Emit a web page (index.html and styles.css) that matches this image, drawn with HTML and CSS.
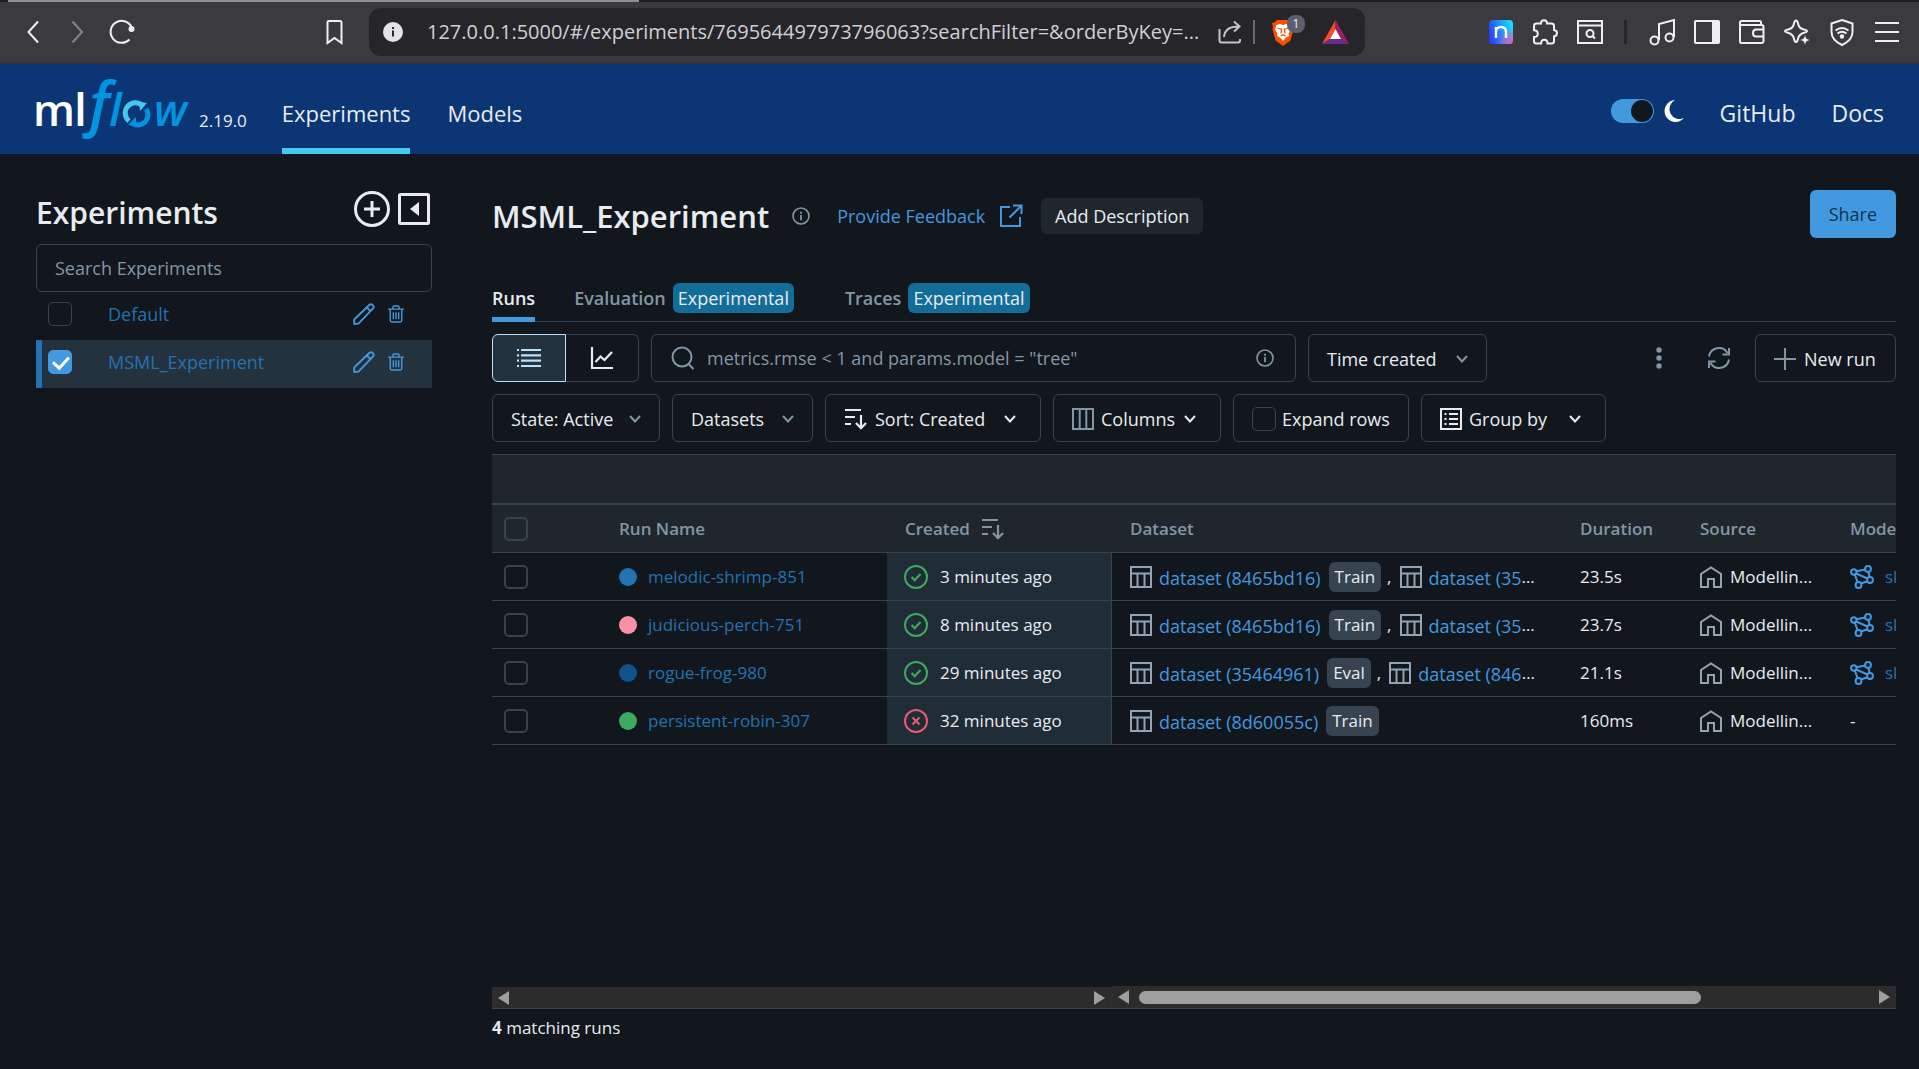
FILE: index.html
```html
<!DOCTYPE html>
<html lang="en">
<head>
<meta charset="utf-8">
<title>MSML_Experiment - MLflow</title>
<link rel="stylesheet" href="styles.css">
</head>
<body>
<svg class="sprite" aria-hidden="true">
  <defs>
    <symbol id="chevron" viewBox="0 0 14 14"><path d="M2 4l5 5.500 5-5.500" fill="none" stroke="currentColor" stroke-width="2"/></symbol>
    <symbol id="info" viewBox="0 0 18 18"><circle cx="9" cy="9" r="8" fill="none" stroke="currentColor" stroke-width="1.600"/><path d="M9 8v5.200M9 4.800v1.900" stroke="currentColor" stroke-width="1.800"/></symbol>
    <symbol id="sort" viewBox="0 0 24 24"><path d="M1 3h16M1 10h10M1 17h6M17 8v13M12 16l5 5.200 5-5.200" fill="none" stroke="currentColor" stroke-width="2.200"/></symbol>
    <symbol id="pencil" viewBox="0 0 22 22"><path d="M1.200 21v-4.500L16.500 1.800q1.600-1.400 3.300.3t.3 3.300L5.400 20.600zM13.800 4.500l3.700 3.700" fill="none" stroke="currentColor" stroke-width="1.900" stroke-linejoin="round"/></symbol>
    <symbol id="trash" viewBox="0 0 18 20"><path d="M0 4.500h18M2.500 4.500v12.500q0 2 2 2h9q2 0 2-2V4.500M5.500 4V2.500q0-1.500 1.500-1.500h4q1.500 0 1.500 1.500V4M6 8v8M9 8v8M12 8v8" fill="none" stroke="currentColor" stroke-width="1.600"/></symbol>
    <symbol id="table" viewBox="0 0 22 22"><path d="M1 1h20v20H1zM1 7.500h20M7.500 7.500V21M14.500 7.500V21" fill="none" stroke="currentColor" stroke-width="2"/></symbol>
    <symbol id="home" viewBox="0 0 22 22"><path d="M1 21V8L11 1.500 21 8v13h-7v-8H8v8z" fill="none" stroke="currentColor" stroke-width="2"/></symbol>
    <symbol id="model" viewBox="0 0 24 24"><g fill="none" stroke="currentColor" stroke-width="2"><circle cx="3.800" cy="7" r="2.700"/><circle cx="18" cy="4" r="2.900"/><circle cx="20" cy="15" r="2.900"/><circle cx="8.500" cy="20" r="2.900"/><path d="M6.500 6.300l8.600-1.700M18.500 7l1 5M11 18.500l6.500-2.300M4.800 9.600l2.800 7.600M6 8.500l11.700 5"/></g></symbol>
    <symbol id="ok" viewBox="0 0 24 24"><circle cx="12" cy="12" r="11" fill="none" stroke="currentColor" stroke-width="2"/><path d="M7.500 12l3.200 3.200L16.500 9" fill="none" stroke="currentColor" stroke-width="2"/></symbol>
    <symbol id="fail" viewBox="0 0 24 24"><circle cx="12" cy="12" r="11" fill="none" stroke="currentColor" stroke-width="2"/><path d="M8.500 8.500l7 7M15.500 8.500l-7 7" fill="none" stroke="currentColor" stroke-width="2"/></symbol>
  </defs>
</svg>

<div class="loading"><span></span></div>
<div class="browser">
  <button class="tool" aria-label="Back"><svg width="24" height="24" viewBox="0 0 24 24"><path d="M17 1.500L7.500 12 17 22.500" class="line"/></svg></button>
  <button class="tool dim" aria-label="Forward"><svg width="24" height="24" viewBox="0 0 24 24"><path d="M7.500 1.500L17 12 7.500 22.500" class="line"/></svg></button>
  <button class="tool" aria-label="Reload"><svg width="26" height="26" viewBox="0 0 26 26"><path d="M20.500 20.500A11 11 0 1 1 22.500 8" class="line"/><circle cx="22.500" cy="10" r="3" fill="currentColor"/></svg></button>
  <button class="tool bookmark" aria-label="Bookmark"><svg width="24" height="26" viewBox="0 0 24 26"><path d="M4.500 24V3.500q0-1.500 1.500-1.500h11q1.500 0 1.500 1.500V24l-7-5z" class="line"/></svg></button>
  <div class="address">
    <svg width="20" height="20" viewBox="0 0 20 20"><circle cx="10" cy="10" r="10" fill="#e3e3e8"/><path d="M10 8.500v6M10 5v2" stroke="#26252a" stroke-width="2"/></svg>
    <input type="text" aria-label="Address" readonly value="127.0.0.1:5000/#/experiments/769564497973796063?searchFilter=&amp;orderByKey=...">
    <button class="tool soft" aria-label="Share page"><svg width="24" height="24" viewBox="0 0 24 24"><path d="M1.500 9v11.500q0 2 2 2H20q2 0 2-2V19M6 17C6.500 10 11 6.500 21 6.500M16 1.500l5.500 5-5.500 5" class="line"/></svg></button>
    <span class="address-sep"></span>
    <button class="tool shields" aria-label="Brave Shields"><svg width="24" height="27" viewBox="0 0 24 27"><path d="M6 1h12l2.500 2.500L23 4l-1 4 .5 2-3 11.500L12 27l-7.500-5.500L1.500 10 2 8 1 4l2.500-.5z" fill="#fb5000"/><path d="M5.500 6l3.500-1 3 1 3-1 3.500 1 1.500 4.500-2.500 4 .5 2.500-3 1.500-3 3.500-3-3.500L6 17l.5-2.500-2.500-4z" fill="#fff"/><path d="M6.500 9l4 1.200L10 14.500M17.500 9l-4 1.200.5 4.300M9.500 17l2.500-1.200 2.500 1.200" fill="none" stroke="#fb5000" stroke-width="1.300"/></svg><span class="count">1</span></button>
    <button class="tool reward" aria-label="Rewards"><svg width="27" height="24" viewBox="0 0 27 24"><path d="M13.500 0L0 24l8-5 5.500-10z" fill="#ff4724"/><path d="M13.500 0L27 24l-8-5-5.500-10z" fill="#9e1f63"/><path d="M0 24l8-5h11l8 5z" fill="#662d91"/><path d="M13.500 9L19 19H8z" fill="#fff"/></svg></button>
  </div>
  <div class="tools">
    <button class="tool" aria-label="Notes"><svg width="24" height="24" viewBox="0 0 24 24"><defs><linearGradient id="ng" x1="0" y1="0.600" x2="1" y2="0.300"><stop offset="0" stop-color="#2b3dff"/><stop offset="1" stop-color="#18e0ff"/></linearGradient><radialGradient id="np" cx="1" cy="1" r="0.700"><stop offset="0" stop-color="#ff4fb8"/><stop offset="1" stop-color="#ff4fb8" stop-opacity="0"/></radialGradient></defs><rect width="24" height="24" rx="4" fill="url(#ng)"/><rect width="24" height="24" rx="4" fill="url(#np)"/><path d="M7 18V7M7 12q0-5 5-5t5 5v6" fill="none" stroke="#fff" stroke-width="2.400"/></svg></button>
    <button class="tool" aria-label="Extensions"><svg width="26" height="26" viewBox="0 0 26 26"><path d="M2 7q0-2.500 2.500-2.500H9Q9 1.200 12 1.200t3 3.300h4.500Q22 4.500 22 7v4q3 .5 3 3.200T22 17.500V22q0 2.500-2.500 2.500H15.500q0-3.800-3.200-3.800t-3.200 3.800H4.500Q2 24.500 2 22v-4q3.800 0 3.800-3.300T2 11.300z" class="line"/></svg></button>
    <button class="tool" aria-label="Search page"><svg width="26" height="24" viewBox="0 0 26 24"><path d="M1 1h24v22H1zM1 5.500h24M15.500 16l2.500 2.500" class="line"/><circle cx="13" cy="13.500" r="3.500" class="line"/></svg></button>
    <span class="tools-sep"></span>
    <button class="tool" aria-label="Media"><svg width="26" height="26" viewBox="0 0 26 26"><path d="M10 21V5l15-4v17" class="line"/><circle cx="5.500" cy="21.500" r="4" class="line"/><circle cx="20.500" cy="18.500" r="4" class="line"/></svg></button>
    <button class="tool" aria-label="Sidebar"><svg width="26" height="24" viewBox="0 0 26 24"><rect x="1" y="1" width="24" height="22" rx="1" class="line"/><path d="M18 1h7v22h-7z" fill="currentColor"/></svg></button>
    <button class="tool" aria-label="Wallet"><svg width="26" height="24" viewBox="0 0 26 24"><path d="M22 5V2.500q0-1.500-1.500-1.500h-18Q1 1 1 2.500v19Q1 23 2.500 23h20q2 0 2-2V7q0-2-2-2H2M25 9.500h-8q-3 0-3 3.500t3 3.500h8" class="line"/></svg></button>
    <button class="tool" aria-label="Assistant"><svg width="26" height="26" viewBox="0 0 26 26"><path d="M12 1.500q1.500 0 2 3 .8 5 6 6 3 .5 3 1.500t-3 1.700q-5 1.300-6 6-.6 3.300-2 3.300t-2-3.300q-1-4.700-6-6-3-.7-3-1.700t3-1.500q5.200-1 6-6 .5-3 2-3z" class="line"/><path d="M21 16l1.500 3.500L26 21l-3.500 1.500L21 26l-1.500-3.500L16 21l3.500-1.500z" fill="currentColor" stroke="#3b3a3e" stroke-width="0.500"/></svg></button>
    <button class="tool" aria-label="VPN"><svg width="26" height="27" viewBox="0 0 26 27"><path d="M13 1l10.500 3.500V13q0 8-10.500 13Q2.500 21 2.500 13V4.500z" class="line"/><path d="M6.500 11.500q6.500-5 13 0M8.500 14.500q4.500-3.500 9 0" class="line"/><circle cx="13" cy="17.500" r="2.200" fill="currentColor"/></svg></button>
    <button class="tool" aria-label="Menu"><svg width="26" height="22" viewBox="0 0 26 22"><path d="M1 2h24M1 11h24M1 20h24" class="line"/></svg></button>
  </div>
</div>

<header class="topbar">
  <a class="brand" href="#" aria-label="MLflow">
    <svg width="156" height="62" viewBox="0 0 156 62"><g font-family="Open Sans, sans-serif"><text x="-3" y="48" font-size="44" font-weight="600" fill="#fff">m</text><text x="38" y="48" font-size="46" font-weight="600" fill="#fff">l</text><g fill="#0194e2" font-style="italic" font-weight="600"><text x="53" y="47" font-size="60">f</text><text x="73" y="48" font-size="46">l</text><text x="118" y="48" font-size="44">w</text></g></g><path d="M93 43A10 10 0 0 1 106 27" fill="none" stroke="#43c9ed" stroke-width="5"/><path d="M103 24l8 1-7 8z" fill="#43c9ed"/><path d="M110 31A10 10 0 0 1 96 45" fill="none" stroke="#0194e2" stroke-width="5"/><path d="M92 47l8 1 0-9z" fill="#0194e2"/></svg>
  </a>
  <span class="version">2.19.0</span>
  <nav class="nav">
    <a class="active" href="#">Experiments</a>
    <a href="#">Models</a>
  </nav>
  <div class="links">
    <label class="theme"><input type="checkbox" role="switch" aria-label="Dark theme" checked><svg width="20" height="22" viewBox="0 0 20 22"><path d="M11 0A11 11 0 1 0 20 18 9.500 9.500 0 0 1 11 0z" fill="#fff"/></svg></label>
    <a href="#">GitHub</a>
    <a href="#">Docs</a>
  </div>
</header>

<div class="page">
  <aside class="sidebar">
    <div class="side-head">
      <h2>Experiments</h2>
      <button class="bare" aria-label="New experiment"><svg width="36" height="36" viewBox="0 0 36 36"><circle cx="18" cy="18" r="16.500" fill="none" stroke="currentColor" stroke-width="3"/><path d="M18 10v16M10 18h16" stroke="currentColor" stroke-width="3"/></svg></button>
      <button class="bare" aria-label="Hide list"><svg width="32" height="32" viewBox="0 0 32 32"><rect x="1.500" y="1.500" width="29" height="29" rx="1" fill="none" stroke="currentColor" stroke-width="3"/><path d="M21 9v14l-9-7z" fill="currentColor"/></svg></button>
    </div>
    <input class="side-search" type="text" placeholder="Search Experiments" aria-label="Search Experiments">
    <ul class="exp-list">
      <li>
        <input type="checkbox" aria-label="Select Default"><a href="#">Default</a>
        <button class="bare" aria-label="Rename"><svg width="22" height="22"><use href="#pencil"/></svg></button>
        <button class="bare" aria-label="Delete"><svg width="16" height="18"><use href="#trash"/></svg></button>
      </li>
      <li class="selected">
        <input type="checkbox" aria-label="Select MSML_Experiment" checked><a href="#">MSML_Experiment</a>
        <button class="bare" aria-label="Rename"><svg width="22" height="22"><use href="#pencil"/></svg></button>
        <button class="bare" aria-label="Delete"><svg width="16" height="18"><use href="#trash"/></svg></button>
      </li>
    </ul>
  </aside>

  <main class="main">
    <div class="title-row">
      <h1>MSML_Experiment</h1>
      <svg class="muted" width="18" height="18"><use href="#info"/></svg>
      <a class="feedback" href="#">Provide Feedback <svg width="24" height="24" viewBox="0 0 24 24"><path d="M11 3H2v19h19v-9M14 1.500h8.500V10M22 2L10.500 13.500" fill="none" stroke="currentColor" stroke-width="2"/></svg></a>
      <button class="add">Add Description</button>
      <button class="share">Share</button>
    </div>

    <div class="tabs">
      <a class="active" href="#">Runs</a>
      <a href="#">Evaluation <span class="tag">Experimental</span></a>
      <a href="#">Traces <span class="tag">Experimental</span></a>
    </div>

    <div class="bar">
      <div class="switcher">
        <button class="on" aria-label="Table view"><svg width="24" height="20" viewBox="0 0 24 20"><path d="M0 2h2M0 7.300h2M0 12.700h2M0 18h2M4 2h20M4 7.300h20M4 12.700h20M4 18h20" stroke="currentColor" stroke-width="2.200"/></svg></button>
        <button aria-label="Chart view"><svg width="22" height="22" viewBox="0 0 22 22"><path d="M1 0v21h21M4.500 15l5-5.500 4 3.500L21 5" fill="none" stroke="currentColor" stroke-width="2.200"/></svg></button>
      </div>
      <div class="search">
        <svg width="24" height="24" viewBox="0 0 24 24"><circle cx="11" cy="11" r="9.500" fill="none" stroke="currentColor" stroke-width="2"/><path d="M17.500 18l5 5" stroke="currentColor" stroke-width="2"/></svg>
        <input type="text" aria-label="Search runs" placeholder="metrics.rmse &lt; 1 and params.model = &quot;tree&quot;">
        <svg width="18" height="18"><use href="#info"/></svg>
      </div>
      <button class="btn time">Time created <svg class="muted" width="14" height="14"><use href="#chevron"/></svg></button>
      <button class="bare muted more" aria-label="More"><svg width="6" height="22" viewBox="0 0 6 22"><circle cx="3" cy="3" r="2.700" fill="currentColor"/><circle cx="3" cy="11" r="2.700" fill="currentColor"/><circle cx="3" cy="19" r="2.700" fill="currentColor"/></svg></button>
      <button class="bare muted refresh" aria-label="Refresh"><svg width="22" height="22" viewBox="0 0 22 22"><path d="M1 9.500A10 10 0 0 1 19.500 6M21 1v6.500h-6.500M21 12.500A10 10 0 0 1 2.500 16M1 21v-6.500h6.500" fill="none" stroke="currentColor" stroke-width="2"/></svg></button>
      <button class="btn new"><svg class="muted" width="22" height="22" viewBox="0 0 22 22"><path d="M11 0v22M0 11h22" stroke="currentColor" stroke-width="2"/></svg>New run</button>
    </div>

    <div class="bar filters">
      <button class="btn w168">State: Active <svg class="muted push" width="14" height="14"><use href="#chevron"/></svg></button>
      <button class="btn w141">Datasets <svg class="muted push" width="14" height="14"><use href="#chevron"/></svg></button>
      <button class="btn w216"><svg width="24" height="24"><use href="#sort"/></svg>Sort: Created <svg class="push" width="14" height="14"><use href="#chevron"/></svg></button>
      <button class="btn w168 columns"><svg class="muted" width="22" height="22" viewBox="0 0 22 22"><path d="M1 1h20v20H1zM7.700 1v20M14.300 1v20" fill="none" stroke="currentColor" stroke-width="2"/></svg>Columns <svg class="push" width="14" height="14"><use href="#chevron"/></svg></button>
      <label class="btn w176"><input type="checkbox">Expand rows</label>
      <button class="btn w185"><svg width="22" height="22" viewBox="0 0 22 22"><path d="M1 1h20v20H1zM4.500 6h2M4.500 11h2M4.500 16h2M9 6h9M9 11h9M9 16h9" fill="none" stroke="currentColor" stroke-width="2"/></svg>Group by <svg class="push" width="14" height="14"><use href="#chevron"/></svg></button>
    </div>

    <div class="grid">
      <table>
        <colgroup><col class="c-check"><col class="c-name"><col class="c-created"><col class="c-data"><col class="c-dur"><col class="c-src"><col></colgroup>
        <thead>
          <tr class="group"><th colspan="7"></th></tr>
          <tr>
            <th class="check"><input type="checkbox" aria-label="Select all"></th>
            <th>Run Name</th>
            <th>Created <svg class="sorted" width="24" height="24"><use href="#sort"/></svg></th>
            <th>Dataset</th><th>Duration</th><th>Source</th><th class="clip">Models</th>
          </tr>
        </thead>
        <tbody>
          <tr>
            <td class="check"><input type="checkbox" aria-label="Select run"></td>
            <td><a class="run" href="#"><i class="dot blue"></i>melodic-shrimp-851</a></td>
            <td class="created"><svg class="good" width="24" height="24"><use href="#ok"/></svg>3 minutes ago</td>
            <td class="data"><div class="sets"><svg width="22" height="22"><use href="#table"/></svg><a href="#">dataset (8465bd16)</a><span class="kind">Train</span>,<svg class="next" width="22" height="22"><use href="#table"/></svg><a href="#">dataset (35464961)</a></div></td>
            <td>23.5s</td>
            <td class="src"><svg width="22" height="22"><use href="#home"/></svg>Modellin...</td>
            <td class="clip"><a class="model" href="#"><svg width="24" height="24"><use href="#model"/></svg>sklearn</a></td>
          </tr>
          <tr>
            <td class="check"><input type="checkbox" aria-label="Select run"></td>
            <td><a class="run" href="#"><i class="dot pink"></i>judicious-perch-751</a></td>
            <td class="created"><svg class="good" width="24" height="24"><use href="#ok"/></svg>8 minutes ago</td>
            <td class="data"><div class="sets"><svg width="22" height="22"><use href="#table"/></svg><a href="#">dataset (8465bd16)</a><span class="kind">Train</span>,<svg class="next" width="22" height="22"><use href="#table"/></svg><a href="#">dataset (35464961)</a></div></td>
            <td>23.7s</td>
            <td class="src"><svg width="22" height="22"><use href="#home"/></svg>Modellin...</td>
            <td class="clip"><a class="model" href="#"><svg width="24" height="24"><use href="#model"/></svg>sklearn</a></td>
          </tr>
          <tr>
            <td class="check"><input type="checkbox" aria-label="Select run"></td>
            <td><a class="run" href="#"><i class="dot navy"></i>rogue-frog-980</a></td>
            <td class="created"><svg class="good" width="24" height="24"><use href="#ok"/></svg>29 minutes ago</td>
            <td class="data"><div class="sets"><svg width="22" height="22"><use href="#table"/></svg><a href="#">dataset (35464961)</a><span class="kind">Eval</span>,<svg class="next" width="22" height="22"><use href="#table"/></svg><a href="#">dataset (8465bd16)</a></div></td>
            <td>21.1s</td>
            <td class="src"><svg width="22" height="22"><use href="#home"/></svg>Modellin...</td>
            <td class="clip"><a class="model" href="#"><svg width="24" height="24"><use href="#model"/></svg>sklearn</a></td>
          </tr>
          <tr>
            <td class="check"><input type="checkbox" aria-label="Select run"></td>
            <td><a class="run" href="#"><i class="dot green"></i>persistent-robin-307</a></td>
            <td class="created"><svg class="bad" width="24" height="24"><use href="#fail"/></svg>32 minutes ago</td>
            <td class="data"><div class="sets"><svg width="22" height="22"><use href="#table"/></svg><a href="#">dataset (8d60055c)</a><span class="kind">Train</span></div></td>
            <td>160ms</td>
            <td class="src"><svg width="22" height="22"><use href="#home"/></svg>Modellin...</td>
            <td class="clip">-</td>
          </tr>
        </tbody>
      </table>
      <div class="scrolls">
        <div class="scroll pinned"><i class="arrow left"></i><i class="arrow right"></i></div>
        <div class="scroll"><i class="arrow left"></i><span class="track"><span class="thumb"></span></span><i class="arrow right"></i></div>
      </div>
    </div>
    <p class="total"><strong>4</strong> matching runs</p>
  </main>
</div>
</body>
</html>
```
FILE: styles.css
```css
:root {
  --bg: #11171c;
  --line: #37444f;
  --text: #e8ecf0;
  --muted: #8396a5;
  --link: #4299e0;
  --deep: #2272b4;
}

* { box-sizing: border-box; }

body {
  margin: 0;
  min-height: 100vh;
  display: flex;
  flex-direction: column;
  background: var(--bg);
  color: var(--text);
  font: 18px/24px "Open Sans", "Noto Sans", sans-serif;
}

svg { display: block; flex: none; overflow: visible; }
.sprite { width: 0; height: 0; position: absolute; }
a { color: inherit; text-decoration: none; }
button, input { font: inherit; color: inherit; }
button { padding: 0; border: 0; background: none; }
.muted { color: var(--muted); }

/* browser toolbar */
.loading { height: 2px; padding-left: 8px; background: #201f24; }
.loading span { display: block; width: 33%; height: 2px; background: #8f8e93; }
.browser {
  height: 62px;
  display: flex;
  align-items: center;
  padding: 0 19px 0 21px;
  background: #3b3a3e;
  border-bottom: 2px solid #333236;
  color: #f0f0f4;
}
.tool { display: flex; flex: none; position: relative; }
.tool + .tool { margin-left: 20px; }
.dim { color: #85848a; }
.soft { color: #c4c4ca; }
.line { fill: none; stroke: currentColor; stroke-width: 2; }
.browser .bookmark { margin-left: 188px; }
.address {
  flex: 1;
  height: 48px;
  display: flex;
  align-items: center;
  margin: 0 124px 0 22px;
  padding: 0 16px 0 14px;
  border-radius: 12px;
  background: #26252a;
}
.address input {
  flex: 1;
  min-width: 0;
  margin: 0 16px 0 24px;
  padding: 0;
  border: 0;
  background: none;
  color: #d0d0d5;
  font-size: 20px;
}
.address-sep { width: 2px; height: 24px; margin: 0 16px 0 11px; background: #6a696f; }
.address .reward { margin-left: 27px; }
.count {
  position: absolute;
  top: -4px;
  left: 16px;
  width: 18px;
  height: 18px;
  border-radius: 8px;
  background: #5d5e6e;
  font-size: 12px;
  line-height: 18px;
  text-align: center;
}
.tools { display: flex; align-items: center; gap: 19px; }
.tools .tool { margin: 0; }
.tools-sep { width: 3px; height: 24px; background: #26252a; margin: 0 3px 0 2px; }

/* application header */
.topbar {
  height: 90px;
  display: flex;
  padding: 0 35px 0 36px;
  background: #0b3574;
  font-size: 23px;
}
.brand { margin-top: 14px; }
.version { margin: 45px 0 0 7px; font-size: 17px; }
.nav, .links { display: flex; gap: 37px; }
.nav { margin-left: 35px; font-size: 22px; }
.nav a { line-height: 98px; height: 90px; border-bottom: 6px solid transparent; }
.nav .active { border-color: #43c9ed; }
.links { margin-left: auto; line-height: 98px; gap: 36px; }
.theme { display: flex; align-items: center; gap: 10px; height: 90px; }
.theme input {
  appearance: none;
  width: 43px;
  height: 24px;
  margin: 4px 0 0;
  padding: 1px;
  border-radius: 12px;
  background: var(--link);
}
.theme svg { margin-top: 4px; }
.theme input::before {
  content: "";
  display: block;
  width: 22px;
  height: 22px;
  margin-left: auto;
  border-radius: 50%;
  background: var(--bg);
}

.page { flex: 1; display: flex; }

/* experiment list */
.sidebar { width: 432px; padding: 34px 0 0 36px; }
.side-head { display: flex; align-items: center; gap: 8px; height: 56px; padding-right: 2px; }
h1, h2 { margin: 0; font-size: 31px; line-height: 48px; font-weight: 600; }
h2 { flex: 1; padding-bottom: 6px; font-size: 30px; }
.bare { display: flex; flex: none; }
.side-head .bare { margin-bottom: 14px; }
.side-search {
  display: block;
  width: 100%;
  height: 48px;
  padding: 0 18px;
  border: 1px solid var(--line);
  border-radius: 6px;
  background: none;
}
::placeholder { color: var(--muted); opacity: 1; }
.exp-list { margin: 0; padding: 0; list-style: none; }
.exp-list li {
  display: flex;
  align-items: center;
  height: 48px;
  padding: 0 28px 4px 6px;
  border-left: 6px solid transparent;
  color: var(--link);
}
.exp-list a { flex: 1; margin-left: 36px; color: var(--deep); }
.exp-list .bare + .bare { margin-left: 13px; }
.exp-list .selected { background: #24323d; border-color: var(--deep); }

input[type="checkbox"]:not([role]) {
  appearance: none;
  flex: none;
  display: block;
  width: 24px;
  height: 24px;
  margin: 0;
  border: 1px solid var(--line);
  border-radius: 5px;
}
input[type="checkbox"]:not([role]):checked { border-color: var(--link); background: var(--link); }
input[type="checkbox"]:not([role]):checked::before {
  content: "";
  display: block;
  width: 7px;
  height: 13px;
  margin: 2px 0 0 7px;
  border: solid #fff;
  border-width: 0 3px 3px 0;
  transform: rotate(42deg);
}

/* experiment page */
.main { flex: 1; min-width: 0; display: flex; flex-direction: column; padding: 36px 23px 29px 60px; }
.title-row { display: flex; align-items: center; height: 52px; }
.title-row > .muted { margin-left: 23px; }
.feedback { display: flex; align-items: center; gap: 14px; margin-left: 27px; color: var(--link); }
.add { height: 36px; margin-left: 18px; padding: 0 14px; border-radius: 6px; background: #1f272d; }
.share {
  height: 48px;
  margin: -4px 0 0 auto;
  padding: 0 19px;
  border-radius: 6px;
  background: var(--link);
  color: #11344f;
}
.tabs {
  display: flex;
  height: 48px;
  margin-top: 32px;
  gap: 39px;
  border-bottom: 1px solid var(--line);
  color: var(--muted);
  font-weight: 600;
}
.tabs a { display: flex; align-items: center; height: 48px; padding-top: 4px; gap: 7px; border-bottom: 5px solid transparent; }
.tabs a + a + a { margin-left: 12px; }
.tabs .active { color: var(--text); border-color: var(--link); }
.tag {
  padding: 3px 5px;
  border-radius: 6px;
  background: #126d99;
  color: var(--text);
  font-weight: 400;
}

.bar { display: flex; gap: 12px; margin-top: 12px; height: 48px; }
.switcher { display: flex; width: 147px; }
.switcher button {
  flex: 1;
  display: flex;
  align-items: center;
  justify-content: center;
  border: 1px solid var(--line);
  border-left: 0;
  border-radius: 0 6px 6px 0;
}
.switcher .on { border: 1px solid #bae1fc; border-radius: 6px 0 0 6px; background: #24323d; color: #bae1fc; }
.search {
  width: 645px;
  display: flex;
  align-items: center;
  gap: 12px;
  padding: 0 21px 0 19px;
  border: 1px solid var(--line);
  border-radius: 6px;
  color: var(--muted);
}
.search input { flex: 1; min-width: 0; padding: 0; border: 0; background: none; }
.btn {
  display: flex;
  flex: none;
  align-items: center;
  gap: 7px;
  padding: 1px 17px 0 18px;
  border: 1px solid var(--line);
  border-radius: 6px;
  white-space: nowrap;
}
.push { margin-left: auto; }
.time { width: 179px; justify-content: space-between; }
.more { align-items: center; margin-left: auto; }
.refresh { align-items: center; margin: 0 13px 0 34px; }
.new { width: 141px; gap: 8px; }
.w141 { width: 141px; }
.w168 { width: 168px; }
.w176 { width: 176px; gap: 6px; }
.w185 { width: 185px; }
.w216 { width: 216px; }
.filters .w216, .filters .w185, .filters .columns { padding-right: 23px; }

/* runs table */
.grid { flex: 1; display: flex; flex-direction: column; margin-top: 12px; border: solid var(--line); border-width: 1px 0; }
table { width: 100%; table-layout: fixed; border-collapse: separate; border-spacing: 0; font-size: 17px; }
.c-check { width: 109px; }
.c-name { width: 286px; }
.c-created { width: 225px; }
.c-data { width: 450px; }
.c-dur { width: 120px; }
.c-src { width: 150px; }
th, td {
  height: 48px;
  padding: 0 0 0 18px;
  border-bottom: 1px solid var(--line);
  text-align: left;
  white-space: nowrap;
  vertical-align: middle;
}
th { background: #1f272d; color: var(--muted); font-weight: 600; }
.group th { height: 50px; border-bottom-width: 2px; }
.check { padding-left: 12px; }
.check input[type="checkbox"] { border-width: 2px; }
.clip { overflow: hidden; }
.sorted { display: inline-block; margin-left: 7px; vertical-align: -6px; }
.run, .model { display: flex; align-items: center; color: var(--deep); }
.dot { width: 18px; height: 18px; margin-right: 11px; border-radius: 50%; }
.blue { background: #2272b4; }
.pink { background: #f792a6; }
.navy { background: #0e538b; }
.green { background: #3caa60; }
.created { padding-left: 17px; background: #202c36; border-right: 1px solid var(--line); }
.created svg, .src svg { display: inline-block; margin-right: 12px; vertical-align: -6px; }
.src svg { margin-right: 8px; vertical-align: -5px; color: #92a4b3; }
.good { color: #3caa60; }
.bad { color: #e65b77; }
.data { padding-right: 20px; }
.sets { overflow: hidden; text-overflow: ellipsis; line-height: 46px; height: 46px; }
.sets svg { display: inline-block; margin-right: 7px; vertical-align: -5px; color: #92a4b3; }
.sets .next { margin-left: 8px; }
.sets a { color: var(--link); font-size: 18px; vertical-align: -2px; }
.kind {
  display: inline-block;
  margin: 0 6px 0 8px;
  padding: 0 6px;
  border-radius: 6px;
  background: var(--line);
  line-height: 30px;
}
.model svg { margin-right: 11px; color: var(--link); }

.scrolls { display: flex; align-items: flex-end; margin-top: auto; }
.scroll { flex: 1; height: 22px; display: flex; align-items: center; justify-content: space-between; padding: 0 6px; background: #2c2c2c; }
.pinned { flex: none; width: 620px; height: 21px; border-right: 1px solid #24323d; }
.arrow { border: 7px solid transparent; }
.left { border-left-width: 0; border-right: 11px solid #9f9f9f; }
.right { border-right-width: 0; border-left: 11px solid #9f9f9f; }
.track { flex: 1; margin: 0 10px; }
.thumb { display: block; width: 77%; height: 13px; border-radius: 7px; background: #9f9f9f; }
.total { margin: 7px 0 0; font-size: 17px; }
```
